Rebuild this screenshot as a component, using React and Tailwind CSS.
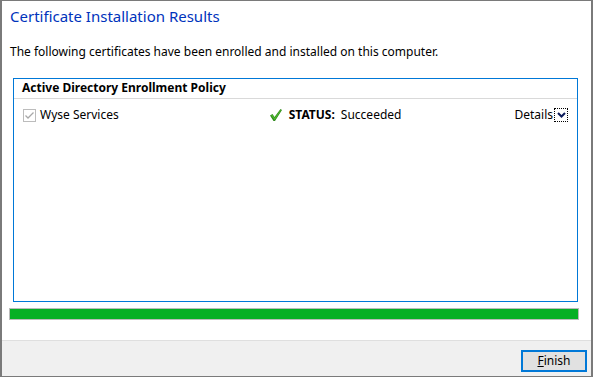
import React from 'react';

const font = { fontFamily: '"Segoe UI", "Noto Sans", "Liberation Sans", sans-serif' };

export default function App() {
  return (
    <div
      className="w-[593px] h-[377px] flex flex-col bg-white border-l-2 border-r-2 border-t border-b border-[#7a7a7a] text-black"
      style={font}
    >
      <div className="pl-[8px] pt-[5px] h-[30px] text-[15px] leading-[20px] text-[#0033bc]">
        Certificate Installation Results
      </div>
      <div className="pl-[8px] pt-[13px] text-[12px] leading-[16px]">
        The following certificates have been enrolled and installed on this computer.
      </div>

      <div className="ml-[11px] mt-[18px] w-[565px] h-[224px] border border-[#0078d7] flex flex-col">
        <div className="h-[20px] border-b border-[#d9d9d9] px-[8px] text-[12px] leading-[18px] font-bold">
          Active Directory Enrollment Policy
        </div>
        <div className="h-[32px] flex items-center text-[12px]">
          <div className="ml-[9px] w-[13px] h-[13px] border border-[#bcbcbc] flex items-center justify-center">
            <svg width="11" height="11" viewBox="0 0 11 11">
              <path d="M1.5 5.5 L4 8 L9.5 2.5" fill="none" stroke="#a8a8a8" strokeWidth="1.3" />
            </svg>
          </div>
          <span className="ml-[4px]">Wyse Services</span>
          <svg className="ml-[150px]" width="14" height="14" viewBox="0 0 14 14">
            <path d="M1 7.5 L3.5 6 L5.5 9 L11.5 1 L13 2 L6 13 L4.5 13 Z" fill="#2f8a1d" />
            <path d="M2 7.5 L3.5 6.8 L5.5 10 L11.5 2 L12 2.5 L5.8 12 Z" fill="#4fb82e" />
          </svg>
          <span className="ml-[6px] font-bold">STATUS:</span>
          <span className="ml-[6px]">Succeeded</span>
          <span className="ml-auto">Details</span>
          <div className="ml-[1px] mr-[9px] w-[14px] h-[14px] border border-dotted border-black flex items-center justify-center">
            <svg width="9" height="6" viewBox="0 0 9 6">
              <path d="M1 1 L4.5 4.5 L8 1" fill="none" stroke="#0a1a5a" strokeWidth="2" />
            </svg>
          </div>
        </div>
      </div>

      <div className="ml-[7px] mt-[6px] w-[570px] h-[12px] border border-[#bcbcbc] bg-[#06b025]" />

      <div className="mt-[20px] flex-1 bg-[#f0f0f0] border-t border-[#dfdfdf] flex items-start justify-end pt-[9px] pr-[4px]">
        <button className="w-[66px] h-[22px] bg-[#e1e1e1] border-2 border-[#0078d7] text-[12px] leading-[16px]">
          <span className="underline">F</span>inish
        </button>
      </div>
    </div>
  );
}
